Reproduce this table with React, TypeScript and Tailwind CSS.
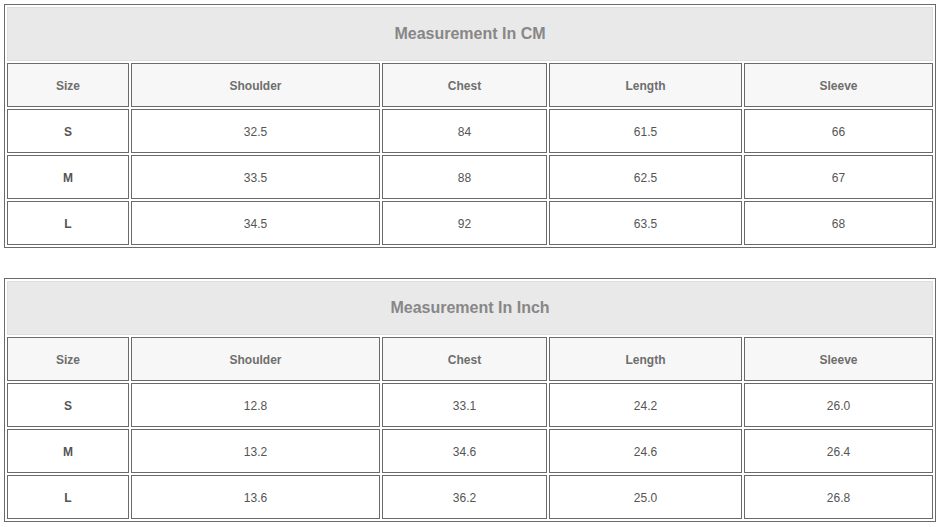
import React from "react";

type Row = [string, string, string, string, string];

const headers: Row = ["Size", "Shoulder", "Chest", "Length", "Sleeve"];

const cmRows: Row[] = [
  ["S", "32.5", "84", "61.5", "66"],
  ["M", "33.5", "88", "62.5", "67"],
  ["L", "34.5", "92", "63.5", "68"],
];

const inchRows: Row[] = [
  ["S", "12.8", "33.1", "24.2", "26.0"],
  ["M", "13.2", "34.6", "24.6", "26.4"],
  ["L", "13.6", "36.2", "25.0", "26.8"],
];

function SizeTable({ title, rows }: { title: string; rows: Row[] }) {
  return (
    <div className="ml-[4px] w-[932px] border border-[#6a6a6a] p-[2px] grid grid-cols-[122px_249px_165px_193px_189px] grid-rows-[54px_44px_44px_44px_44px] gap-[2px]">
      <div className="col-span-5 flex items-center justify-center border border-[#dedede] bg-[#e9e9e9] text-[16px] font-bold text-[#878787]">
        {title}
      </div>
      {headers.map((h) => (
        <div
          key={h}
          className="flex items-center justify-center pt-[2px] border border-[#6a6a6a] bg-[#f7f7f7] text-[12px] font-bold text-[#6e6e6e]"
        >
          {h}
        </div>
      ))}
      {rows.map((r) =>
        r.map((c, i) => (
          <div
            key={r[0] + i}
            className={
              i === 0
                ? "flex items-center justify-center pt-[2px] border border-[#6a6a6a] bg-white text-[12px] font-bold text-[#555555]"
                : "flex items-center justify-center pt-[2px] border border-[#6a6a6a] bg-white text-[12px] text-[#555555]"
            }
          >
            {c}
          </div>
        ))
      )}
    </div>
  );
}

export default function App() {
  return (
    <div className="w-[938px] h-[527px] bg-white pt-[4px] flex flex-col gap-[30px] font-['Liberation_Sans',Arial,sans-serif]">
      <SizeTable title="Measurement In CM" rows={cmRows} />
      <SizeTable title="Measurement In Inch" rows={inchRows} />
    </div>
  );
}
